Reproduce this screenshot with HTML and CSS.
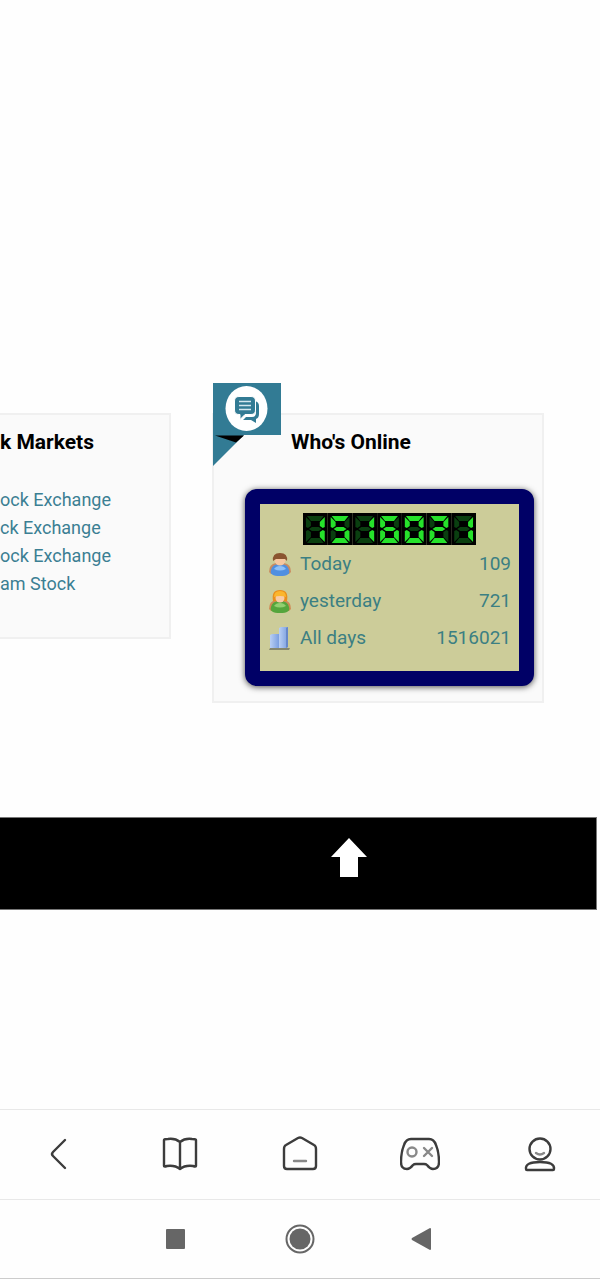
FILE: index.html
```
<!DOCTYPE html>
<html lang="en">
<head>
    <meta charset="UTF-8">
    <meta name="viewport" content="width=device-width, initial-scale=1.0">
    <title>Who's Online</title>
    <link rel="stylesheet" href="styles.css">
</head>
<body>

<main class="page">
    <div class="panels">
        <section class="panel markets">
            <h2>k Markets</h2>
            <ul>
                <li><a href="#">ock Exchange</a></li>
                <li><a href="#">ck Exchange</a></li>
                <li><a href="#">ock Exchange</a></li>
                <li><a href="#">am Stock</a></li>
            </ul>
        </section>

        <section class="panel online">
            <svg class="ribbon" viewBox="0 0 68 83" aria-hidden="true">
                <path fill="#327b94" d="M0 0h68v52H0z"/>
                <path fill="#327b94" d="M0 52h31L0 83z"/>
                <path fill="#000" d="M2 52.500h29l-8 7z"/>
                <ellipse cx="33.500" cy="25.500" rx="21" ry="22.500" fill="#fff"/>
                <path fill="#327b94" d="M42 18q4 1 4 5v8q0 4-3 5v4l-5-3h-8l3-3h6q4 0 4-4z"/>
                <path fill="#327b94" stroke="#fff" d="M26 13.500h12q4.500 0 4.500 4.500v9q0 4.500-4.500 4.500h-6l-5 5v-5h-1q-4.500 0-4.500-4.500v-9q0-4.500 4.500-4.500z"/>
                <path stroke="#d5e8ef" stroke-width="1.500" d="M26 18.500h12M26 22.500h12M26 26.500h12"/>
            </svg>
            <h2>Who's Online</h2>
            <div class="counter">
                <svg class="digits" id="digits" viewBox="0 0 175 32" preserveAspectRatio="none" role="img" aria-label="1516021"></svg>
                <table>
                    <tr>
                        <td class="icon">
                            <svg viewBox="0 0 24 24">
                                <path fill="#c98b60" d="M1 20q0-8 7-9h8q7 1 7 9l-2 2H3z"/>
                                <path fill="#4f8fe0" d="M3 18q1-6 9-6t9 6q2 6-9 6t-9-6z"/>
                                <path fill="#8fc0f7" d="M6 17q2-3 6-3t6 3q-6 3-12 0z"/>
                                <ellipse cx="12" cy="8" rx="5.500" ry="5.500" fill="#f6c7a0"/>
                                <path fill="#8a5430" d="M5 9Q4 1 12 1t7 8l-2-2H8z"/>
                            </svg>
                        </td>
                        <td><a href="#">Today</a></td>
                        <td class="num">109</td>
                    </tr>
                    <tr>
                        <td class="icon">
                            <svg viewBox="0 0 24 24">
                                <path fill="#cf8a55" d="M1 20q0-8 7-9h8q7 1 7 9l-2 2H3z"/>
                                <path fill="#55a53c" d="M3 18q1-6 9-6t9 6q2 6-9 6t-9-6z"/>
                                <path fill="#92cf70" d="M6 17q2-3 6-3t6 3q-6 3-12 0z"/>
                                <path fill="#e98f1c" d="M5 12Q3 1 12 1t7 11z"/>
                                <ellipse cx="12" cy="9" rx="4.500" ry="4.500" fill="#f8cba5"/>
                                <path fill="#fbb62d" d="M6 8q0-6 6-6t6 6q-6-2-12 0z"/>
                            </svg>
                        </td>
                        <td><a href="#">yesterday</a></td>
                        <td class="num">721</td>
                    </tr>
                    <tr>
                        <td class="icon">
                            <svg viewBox="0 0 24 24">
                                <defs>
                                    <linearGradient id="bar">
                                        <stop offset="0" stop-color="#b9cff3"/>
                                        <stop offset="1" stop-color="#7b9fe0"/>
                                    </linearGradient>
                                </defs>
                                <path fill="#86876c" d="M2 22h20l-1 2H1z"/>
                                <path fill="url(#bar)" d="M2 9l2-1h7v14H2z"/>
                                <path fill="url(#bar)" d="M11 2l2-1h7v20l-2 1h-7z"/>
                                <path fill="#6788c9" d="M18 2l2-1v20l-2 1z"/>
                            </svg>
                        </td>
                        <td><a href="#">All days</a></td>
                        <td class="num">1516021</td>
                    </tr>
                </table>
            </div>
        </section>
    </div>

    <footer class="footer">
        <a href="#" aria-label="Back to top">
            <svg width="36" height="40" viewBox="0 0 36 40">
                <path fill="#fff" d="M18 0l18 19h-9v20H9V19H0z"/>
            </svg>
        </a>
    </footer>
</main>

<nav class="toolbar">
    <button aria-label="Back">
        <svg viewBox="0 0 40 40"><path d="M25 6L13 18q-2 2 0 4l12 12"/></svg>
    </button>
    <button aria-label="Bookmarks">
        <svg viewBox="0 0 40 40"><path d="M20 8q-5-4-12-3-4 0-4 1v26q0 1 3 0 8-1 13 3 5-4 13-3 3 1 3 0V6q0-1-4-1-7-1-12 3zv27"/></svg>
    </button>
    <button aria-label="Home">
        <svg viewBox="0 0 40 40"><path d="M18 4L6 11q-2 1-2 4v17q0 3 3 3h26q3 0 3-3V15q0-3-2-4L22 4q-2-1-4 0z"/><path class="soft" d="M14 27h12"/></svg>
    </button>
    <button aria-label="Games">
        <svg viewBox="0 0 40 40"><path d="M11 5h18q5 0 7 6 3 7 3 17 0 7-6 7-3 0-6-4-1-1-3-1h-8q-2 0-3 1-3 4-6 4-6 0-6-7 0-10 3-17 2-6 7-6z"/><path class="soft" d="M24 14l8 8M32 14l-8 8"/><circle class="soft" cx="12" cy="18" r="4.500"/></svg>
    </button>
    <button aria-label="Profile">
        <svg viewBox="0 0 40 40"><circle cx="20" cy="15" r="10.500"/><path d="M6 35q-1-7 14-7t14 7q0 1-1 1H7q-1 0-1-1z"/><path class="soft" d="M16 19q4 3 8 0"/></svg>
    </button>
</nav>

<nav class="system">
    <button aria-label="Recent apps">
        <svg viewBox="0 0 30 30"><rect x="3" y="5" width="19" height="20" rx="1"/></svg>
    </button>
    <button aria-label="Home screen">
        <svg viewBox="0 0 30 30"><circle cx="15" cy="15" r="10.500"/><circle class="ring" cx="15" cy="15" r="13.500"/></svg>
    </button>
    <button aria-label="System back">
        <svg viewBox="0 0 30 30"><path d="M5 14L23 4q1 0 1 1v20q0 1-1 1L5 16q-1-1 0-2z"/></svg>
    </button>
</nav>

<script>
    // seven segments: top, upper right, lower right, bottom, lower left, upper left, middle
    const segments = [
        "M4 3H21L17 8H8Z",
        "M22 4V14L20 15L17 13V9Z",
        "M22 18V29L17 24V19L20 17Z",
        "M4 30H21L17 25H8Z",
        "M3 18V29L8 24V19L5 17Z",
        "M3 4V14L5 15L8 13V9Z",
        "M9 14H16L19 16L16 18H9L6 16Z"
    ];
    const lit = { 0: [0, 1, 2, 3, 4, 5], 1: [1, 2], 2: [0, 1, 6, 4, 3], 5: [0, 5, 6, 2, 3], 6: [0, 5, 4, 3, 2, 6] };

    const digits = document.getElementById('digits');
    let cells = '';
    [...digits.getAttribute('aria-label')].forEach((digit, i) => {
        cells += `<g transform="translate(${i * 25} 0)"><rect width="25" height="32"/>`;
        segments.forEach((d, s) => {
            cells += `<path class="${lit[digit].includes(s) ? 'on' : 'off'}" d="${d}"/>`;
        });
        cells += '</g>';
    });
    digits.innerHTML = cells;
</script>

</body>
</html>
```
FILE: styles.css
```
* {
    box-sizing: border-box;
}
body {
    margin: 0;
    min-height: 100vh;
    display: flex;
    flex-direction: column;
    overflow-x: hidden;
    background: #fefefe;
    color: #000;
    font-family: Roboto, "Liberation Sans", sans-serif;
    font-size: 19px;
    border-bottom: 1px solid #ccc;
}
a {
    color: #3b7f93;
    text-decoration: none;
}
button {
    padding: 0;
    border: none;
    background: none;
    cursor: pointer;
}
svg {
    display: block;
}
.page {
    flex: 1;
    padding-top: 413px;
}
.panels {
    display: grid;
    grid-template-columns: 171fr 332fr;
    gap: 41px;
    align-items: start;
    padding-right: 56px;
}
.panel {
    position: relative;
    background: #fafafa;
    border: 2px solid #f0f0f0;
}
.panel h2 {
    margin: 0;
    font-size: 21px;
    line-height: 28px;
    font-weight: 700;
}
.markets {
    padding: 13px 0 39px;
    border-left: none;
    white-space: nowrap;
}
.markets ul {
    list-style: none;
    margin: 30px 0 0;
    padding: 0;
    font-size: 18px;
    line-height: 28px;
}
.online {
    padding: 13px 8px 15px 31px;
}
.online h2 {
    margin-left: 46px;
}
.ribbon {
    position: absolute;
    top: -32px;
    left: -1px;
    width: 68px;
    height: 83px;
}
.counter {
    margin-top: 33px;
    padding: 9px 8px 15px;
    background: #cccc99;
    border: 15px solid #000066;
    border-radius: 12px;
    box-shadow: 0 1px 6px rgba(0, 0, 0, 0.7);
}
.digits {
    width: 173px;
    height: 32px;
    margin: 0 auto;
}
.digits .on {
    fill: #26e22b;
}
.digits .off {
    fill: #0a3f10;
}
.counter table {
    width: 100%;
    border-collapse: collapse;
}
.counter td {
    height: 37px;
    padding: 0;
    color: #3b7f83;
}
.counter td a {
    color: #3b7f83;
}
.counter .icon {
    width: 32px;
}
.icon svg {
    width: 24px;
    height: 24px;
}
.counter .num {
    text-align: right;
}
.footer {
    display: flex;
    justify-content: center;
    margin: 114px 3px 0 0;
    padding: 20px 0 31px 101px;
    background: #000;
    border: 1px solid #777;
    border-left: none;
}
.toolbar {
    display: grid;
    grid-template-columns: repeat(5, 1fr);
    height: 90px;
    padding-bottom: 2px;
    border-top: 1px solid #e8e8e8;
}
.toolbar button,
.system button {
    display: flex;
    align-items: center;
    justify-content: center;
}
.toolbar svg {
    width: 40px;
    height: 40px;
    fill: none;
    stroke: #3c3c3c;
    stroke-width: 2.4;
    stroke-linecap: round;
    stroke-linejoin: round;
}
.toolbar .soft {
    stroke: #888;
}
.system {
    display: flex;
    justify-content: center;
    gap: 92px;
    height: 79px;
    border-top: 1px solid #e8e8e8;
}
.system svg {
    width: 30px;
    height: 30px;
    fill: #666;
}
.system .ring {
    fill: none;
    stroke: #666;
    stroke-width: 2;
}
```
